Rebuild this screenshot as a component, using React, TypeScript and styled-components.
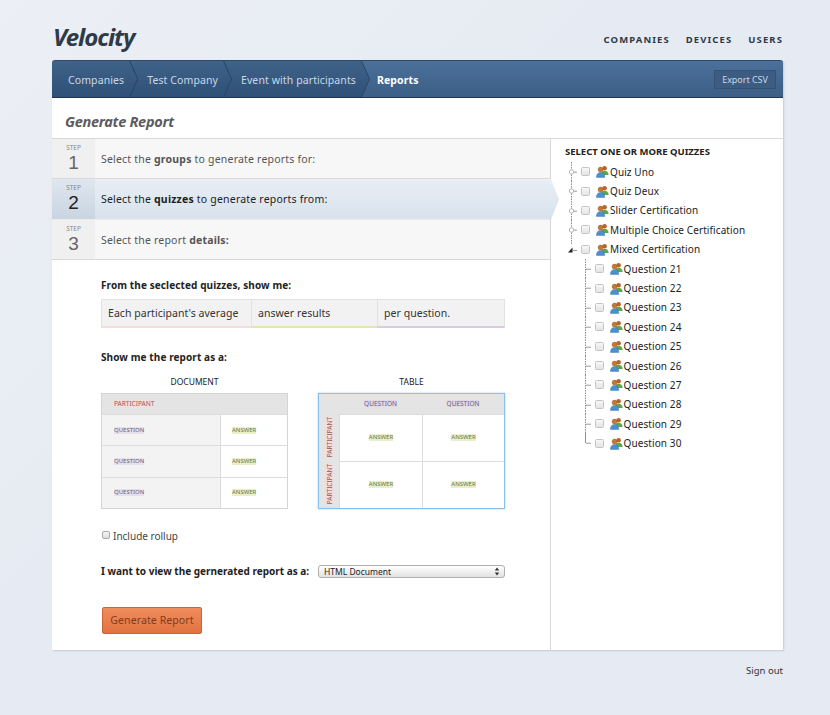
import styled, { createGlobalStyle } from 'styled-components';

const GlobalStyle = createGlobalStyle`
  html, body {
    margin: 0;
    padding: 0;
    background: #e6ebf3;
    font-family: 'Noto Sans', 'Open Sans', sans-serif;
    color: #333;
  }
  * { box-sizing: border-box; }
`;

const QUESTIONS = [21, 22, 23, 24, 25, 26, 27, 28, 29, 30];
const QUIZZES = ['Quiz Uno', 'Quiz Deux', 'Slider Certification', 'Multiple Choice Certification'];

const PeopleIcon = () => (
  <svg width="13" height="13" viewBox="0 0 13 13">
    <circle cx="8.6" cy="3.2" r="2.3" fill="#b5662e" />
    <path d="M5 10c0-3 1.6-4.2 3.6-4.2S12.6 7 12.6 10z" fill="#5aa84a" />
    <circle cx="4.6" cy="4.6" r="2.5" fill="#c9772f" stroke="#8a4d1e" strokeWidth="0.4" />
    <path d="M0.4 12.4c0-3.4 1.8-5 4.2-5s4.2 1.6 4.2 5z" fill="#4d8fd0" stroke="#2f6aa5" strokeWidth="0.4" />
  </svg>
);

const TreeGuide = ({ kind }: { kind: 'closed' | 'open' | 'branch' | 'last' }) => (
  <GuideSvg width="14" height="19.4" viewBox="0 0 14 19.4">
    {kind !== 'open' && (
      <path
        d={kind === 'last' ? 'M7.5 0V10' : 'M7.5 0V19.4'}
        stroke="#8c8c8c"
        strokeWidth="1"
        strokeDasharray={kind === 'last' ? undefined : '1.5 1'}
        fill="none"
      />
    )}
    {kind === 'open' ? (
      <>
        <path d="M7.5 0V5" stroke="#8c8c8c" strokeDasharray="1.5 1" fill="none" />
        <path d="M4 12.5 8.5 7.5V12.5z" fill="#222" />
        <path d="M9 10.5H13" stroke="#999" fill="none" />
      </>
    ) : (
      <path d="M8 10.2H13" stroke="#999" fill="none" />
    )}
    {kind === 'closed' && <circle cx="7.5" cy="10" r="2.2" fill="#fff" stroke="#b5b5b5" />}
  </GuideSvg>
);

const SelectArrows = () => (
  <ArrowSvg width="6" height="9" viewBox="0 0 6 9">
    <path d="M3 0.5 5.2 3.6H0.8zM3 8.5 0.8 5.4H5.2z" fill="#333" />
  </ArrowSvg>
);

const App = () => (
  <>
    <GlobalStyle />
    <Page>
      <Header>
        <Logo>Velocity</Logo>
        <TopNav>
          <TopLink>Companies</TopLink>
          <TopLink>Devices</TopLink>
          <TopLink>Users</TopLink>
        </TopNav>
      </Header>

      <Card>
        <Crumbs>
          <Crumb>Companies</Crumb>
          <CrumbSep />
          <Crumb>Test Company</Crumb>
          <CrumbSep />
          <Crumb>Event with participants</Crumb>
          <CrumbSep />
          <ActiveCrumb>
            <strong>Reports</strong>
            <ExportButton>Export CSV</ExportButton>
          </ActiveCrumb>
        </Crumbs>

        <PageTitle>Generate Report</PageTitle>

        <Columns>
          <MainColumn>
            <Step>
              <StepNum>
                <small>STEP</small>
                <b>1</b>
              </StepNum>
              <StepText>
                Select the <strong>groups</strong> to generate reports for:
              </StepText>
            </Step>
            <Step $active>
              <StepNum $active>
                <small>STEP</small>
                <b>2</b>
              </StepNum>
              <StepText $active>
                Select the <strong>quizzes</strong> to generate reports from:
              </StepText>
            </Step>
            <Step>
              <StepNum>
                <small>STEP</small>
                <b>3</b>
              </StepNum>
              <StepText>
                Select the report <strong>details:</strong>
              </StepText>
            </Step>

            <Details>
              <Label>From the seclected quizzes, show me:</Label>
              <Sentence>
                <SentencePart $width={150} $accent="#f8dcdc">Each participant's average</SentencePart>
                <SentencePart $width={126} $accent="#dfe8a6">answer results</SentencePart>
                <SentencePart $width={128} $accent="#d9cde4">per question.</SentencePart>
              </Sentence>

              <ShowLabel>Show me the report as a:</ShowLabel>
              <Layouts>
                <LayoutOption>
                  <LayoutName>DOCUMENT</LayoutName>
                  <DocumentPreview>
                    <DocHead>
                      <Tag $size={6.5} $tone="#f7dcdc" $color="#8f6060">PARTICIPANT</Tag>
                    </DocHead>
                    {[0, 1, 2].map((i) => (
                      <DocRow key={i}>
                        <DocQuestion>
                          <Tag $tone="#e6dfec" $color="#6b6478">QUESTION</Tag>
                        </DocQuestion>
                        <DocAnswer>
                          <Tag $tone="#e8f0c8" $color="#6a7550">ANSWER</Tag>
                        </DocAnswer>
                      </DocRow>
                    ))}
                  </DocumentPreview>
                </LayoutOption>
                <LayoutOption>
                  <LayoutName>TABLE</LayoutName>
                  <TablePreview>
                    <Corner />
                    <TableHead>
                      <Tag $size={6.5} $tone="#e0d8e8" $color="#6b6478">QUESTION</Tag>
                    </TableHead>
                    <TableHead>
                      <Tag $size={6.5} $tone="#e0d8e8" $color="#6b6478">QUESTION</Tag>
                    </TableHead>
                    {[0, 1].map((r) => (
                      <TableRow key={r}>
                        <TableSide>
                          <VerticalTag>PARTICIPANT</VerticalTag>
                        </TableSide>
                        <TableCell>
                          <Tag $tone="#e8f0c8" $color="#6a7550">ANSWER</Tag>
                        </TableCell>
                        <TableCell>
                          <Tag $tone="#e8f0c8" $color="#6a7550">ANSWER</Tag>
                        </TableCell>
                      </TableRow>
                    ))}
                  </TablePreview>
                </LayoutOption>
              </Layouts>

              <Rollup>
                <RollupBox />
                Include rollup
              </Rollup>

              <FormatRow>
                <FormatLabel>I want to view the gernerated report as a:</FormatLabel>
                <FormatSelect>
                  HTML Document
                  <SelectArrows />
                </FormatSelect>
              </FormatRow>

              <GenerateButton>Generate Report</GenerateButton>
            </Details>
          </MainColumn>

          <Side>
            <SideTitle>SELECT ONE OR MORE QUIZZES</SideTitle>
            <Tree>
              {QUIZZES.map((q) => (
                <TreeRow key={q}>
                  <TreeGuide kind="closed" />
                  <TreeCheck />
                  <PeopleIcon />
                  <TreeLabel>{q}</TreeLabel>
                </TreeRow>
              ))}
              <TreeRow>
                <TreeGuide kind="open" />
                <TreeCheck />
                <PeopleIcon />
                <TreeLabel>Mixed Certification</TreeLabel>
              </TreeRow>
              {QUESTIONS.map((n, i) => (
                <TreeRow key={n} $child>
                  <TreeGuide kind={i === QUESTIONS.length - 1 ? 'last' : 'branch'} />
                  <TreeCheck />
                  <PeopleIcon />
                  <TreeLabel>Question {n}</TreeLabel>
                </TreeRow>
              ))}
            </Tree>
          </Side>
        </Columns>
      </Card>

      <Footer>Sign out</Footer>
    </Page>
  </>
);

const Page = styled.div`
  width: 830px;
  height: 715px;
  overflow: hidden;
  padding: 0 47px 0 52px;
  background: linear-gradient(135deg, #eceff4 0%, #e6ebf3 40%);
`;

const Header = styled.div`
  height: 60px;
  display: flex;
  justify-content: space-between;
  align-items: flex-start;
`;

const Logo = styled.div`
  margin: 18px 0 0 1px;
  font-size: 24px;
  line-height: 38px;
  height: 38px;
  font-weight: 700;
  font-style: italic;
  letter-spacing: -1px;
  color: #2f3a47;
`;

const TopNav = styled.div`
  display: flex;
  gap: 16px;
  margin-top: 33px;
`;

const TopLink = styled.a`
  font-size: 9.5px;
  line-height: 14px;
  font-weight: 700;
  letter-spacing: 1.1px;
  text-transform: uppercase;
  color: #2f3a47;
`;

const Card = styled.div`
  width: 731px;
  height: 590px;
  background: #fff;
  border-radius: 3px 3px 0 0;
  box-shadow: 1px 1px 2px #bfcad9;
  display: flex;
  flex-direction: column;
`;

const Crumbs = styled.div`
  height: 38px;
  flex: none;
  display: flex;
  align-items: stretch;
  border-radius: 3px 3px 0 0;
  border-top: 1px solid #2f4a6b;
  border-bottom: 1px solid #22364f;
  background: linear-gradient(#3f6289, #2f5077);
  overflow: hidden;
`;

const Crumb = styled.div`
  display: flex;
  align-items: center;
  padding: 1px 0 0 9px;
  font-size: 10.5px;
  letter-spacing: 0.1px;
  color: #c9d7e6;

  &:first-child {
    padding-left: 16px;
  }
`;

const CrumbSep = styled.div`
  position: relative;
  z-index: 1;
  width: 9px;
  margin-left: 5px;
  background: #2a4364;
  clip-path: polygon(0 0, 1px 0, 100% 50%, 1px 100%, 0 100%, calc(100% - 1px) 50%);
`;

const ActiveCrumb = styled.div`
  flex: 1;
  margin-left: -9px;
  padding: 0 7px 0 16px;
  display: flex;
  align-items: center;
  justify-content: space-between;
  font-size: 10.5px;
  letter-spacing: 0.1px;
  color: #fff;
  background: linear-gradient(#4b7099, #3c5e87);
  clip-path: polygon(0 0, 100% 0, 100% 100%, 0 100%, 8px 50%);

  strong {
    padding-top: 1px;
  }
`;

const ExportButton = styled.div`
  width: 62px;
  height: 19px;
  display: flex;
  align-items: center;
  justify-content: center;
  font-size: 9px;
  letter-spacing: -0.05px;
  color: #c9d7e6;
  background: #3c5c82;
  border: 1px solid #355274;
`;

const PageTitle = styled.div`
  height: 41px;
  flex: none;
  padding: 6px 0 0 13px;
  display: flex;
  align-items: center;
  border-bottom: 1px solid #d8d8d8;
  font-size: 14.5px;
  font-weight: 700;
  font-style: italic;
  letter-spacing: -0.3px;
  color: #5c5c5c;
`;

const Columns = styled.div`
  flex: 1;
  display: flex;
`;

const MainColumn = styled.div`
  width: 499px;
  flex: none;
  border-right: 1px solid #d8d8d8;
`;

const Step = styled.div<{ $active?: boolean }>`
  height: 40.3px;
  display: flex;
  border-bottom: 1px solid #d8d8d8;
  background: ${(p) => (p.$active ? 'linear-gradient(#e9eef5, #d8e2ec)' : '#f7f7f7')};
  ${(p) =>
    p.$active
      ? `
    position: relative;
    z-index: 1;
    margin-right: -9px;
    clip-path: polygon(0 0, calc(100% - 8px) 0, 100% 50%, calc(100% - 8px) 100%, 0 100%);
  `
      : ''}
`;

const StepNum = styled.div<{ $active?: boolean }>`
  width: 43px;
  flex: none;
  display: flex;
  flex-direction: column;
  align-items: center;
  padding-top: 5px;
  background: ${(p) => (p.$active ? 'linear-gradient(#dfe6ee, #c9d5e1)' : '#f0f0f0')};
  color: ${(p) => (p.$active ? '#222' : '#666')};

  small {
    font-size: 6.5px;
    line-height: 8px;
    height: 8px;
    color: #888;
  }
  b {
    font-family: 'Liberation Sans', sans-serif;
    font-size: 19px;
    line-height: 22px;
    font-weight: 400;
  }
`;

const StepText = styled.div<{ $active?: boolean }>`
  padding-left: 6px;
  font-size: 10.5px;
  line-height: 40px;
  letter-spacing: 0.2px;
  white-space: nowrap;
  color: ${(p) => (p.$active ? '#222' : '#555')};
`;

const Details = styled.div`
  padding: 19px 0 0 49px;
`;

const Label = styled.div`
  font-size: 10px;
  line-height: 13px;
  font-weight: 700;
  letter-spacing: 0.1px;
  color: #222;
`;

const Sentence = styled.div`
  display: flex;
  width: 404px;
  margin-top: 7px;
`;

const SentencePart = styled.div<{ $width: number; $accent: string }>`
  width: ${(p) => p.$width}px;
  height: 29px;
  padding-left: 6px;
  display: flex;
  align-items: center;
  font-size: 10.5px;
  letter-spacing: 0.05px;
  white-space: nowrap;
  color: #333;
  background: #f2f2f2;
  border: 1px solid #e2e2e2;
  border-bottom: 2px solid ${(p) => p.$accent};
  border-right-width: 0;

  &:last-child {
    border-right-width: 1px;
  }
`;

const ShowLabel = styled(Label)`
  margin-top: 23px;
`;

const Layouts = styled.div`
  display: flex;
  gap: 30px;
  margin-top: 12px;
`;

const LayoutOption = styled.div`
  width: 187px;
`;

const LayoutName = styled.div`
  height: 12px;
  margin-bottom: 5px;
  text-align: center;
  font-size: 8.5px;
  line-height: 12px;
  color: #222;
`;

const DocumentPreview = styled.div`
  height: 116px;
  border: 1px solid #d4d4d4;
  display: flex;
  flex-direction: column;
`;

const DocHead = styled.div`
  height: 20px;
  padding-left: 12px;
  display: flex;
  align-items: center;
  background: #e4e4e4;
`;

const DocRow = styled.div`
  flex: 1;
  display: flex;
  border-top: 1px solid #dcdcdc;
`;

const DocQuestion = styled.div`
  width: 119px;
  padding-left: 12px;
  display: flex;
  align-items: center;
  background: #f3f3f3;
  border-right: 1px solid #dcdcdc;
`;

const DocAnswer = styled.div`
  flex: 1;
  padding-left: 11px;
  display: flex;
  align-items: center;
`;

const Tag = styled.span<{ $tone: string; $color: string; $size?: number }>`
  font-size: ${(p) => p.$size ?? 6}px;
  line-height: 7px;
  color: ${(p) => p.$color};
  background: ${(p) => p.$tone};
`;

const VerticalTag = styled.span`
  writing-mode: vertical-rl;
  transform: rotate(180deg);
  font-size: 6.5px;
  line-height: 7px;
  color: #8f6060;
  background: #f7dcdc;
`;

const TablePreview = styled.div`
  height: 116px;
  border: 1px solid #86c1ee;
  box-shadow: 0 0 2px #a9d4f5;
  display: grid;
  grid-template-columns: 20px 83px 1fr;
  grid-template-rows: 20px 1fr 1fr;
`;

const Corner = styled.div`
  background: #e4e4e4;
`;

const TableHead = styled.div`
  display: flex;
  align-items: center;
  justify-content: center;
  background: #e4e4e4;
`;

const TableRow = styled.div`
  display: contents;
`;

const TableSide = styled.div`
  display: flex;
  align-items: center;
  justify-content: center;
  background: #e4e4e4;
`;

const TableCell = styled.div`
  display: flex;
  align-items: center;
  justify-content: center;
  border-top: 1px solid #dcdcdc;
  border-left: 1px solid #dcdcdc;
`;

const Rollup = styled.div`
  margin-top: 20px;
  height: 14px;
  display: flex;
  align-items: center;
  font-size: 10px;
  color: #444;
`;

const RollupBox = styled.span`
  width: 8px;
  height: 8px;
  margin: 0 3px 2px 1px;
  border: 1px solid #aaa;
  border-radius: 2px;
  background: linear-gradient(#f4f4f4, #dedede);
`;

const FormatRow = styled.div`
  margin-top: 22px;
  height: 14px;
  display: flex;
  align-items: center;
  gap: 8px;
`;

const FormatLabel = styled(Label)`
  width: 209px;
  flex: none;
  letter-spacing: 0;
  white-space: nowrap;
`;

const FormatSelect = styled.div`
  position: relative;
  width: 187px;
  height: 13px;
  padding-left: 5px;
  display: flex;
  align-items: center;
  font-size: 8.5px;
  color: #222;
  background: linear-gradient(#fff, #e2e2e2);
  border: 1px solid #b0b0b0;
  border-radius: 3px;
`;

const ArrowSvg = styled.svg`
  position: absolute;
  right: 4px;
  top: 1px;
`;

const GenerateButton = styled.div`
  width: 100px;
  height: 27px;
  margin: 28px 0 0 1px;
  display: flex;
  align-items: center;
  justify-content: center;
  font-size: 10.5px;
  letter-spacing: 0.1px;
  color: #7d3d1e;
  background: linear-gradient(#f08d5e, #e2713f);
  border: 1px solid #c9633a;
  border-radius: 2px;
`;

const Side = styled.div`
  flex: 1;
  padding: 6px 0 0 14px;
`;

const SideTitle = styled.div`
  font-size: 9.5px;
  line-height: 13px;
  font-weight: 700;
  color: #222;
`;

const Tree = styled.div`
  margin-top: 4px;
  margin-left: -1px;
`;

const TreeRow = styled.div<{ $child?: boolean }>`
  height: 19.4px;
  display: flex;
  align-items: center;
  padding-left: ${(p) => (p.$child ? '13.5px' : '0')};
`;

const GuideSvg = styled.svg`
  flex: none;
`;

const TreeCheck = styled.span`
  width: 9px;
  height: 9px;
  margin: 0 6px 0 3px;
  flex: none;
  border: 1px solid #c4c4c4;
  border-radius: 1.5px;
  background: linear-gradient(#f7f7f7, #e4e4e4);
`;

const TreeLabel = styled.span`
  margin-left: 1px;
  font-size: 10px;
  letter-spacing: 0.1px;
  color: #222;
  white-space: nowrap;
`;

const Footer = styled.div`
  margin-top: 14px;
  text-align: right;
  font-size: 9.5px;
  line-height: 14px;
  color: #333;
`;

export default App;
